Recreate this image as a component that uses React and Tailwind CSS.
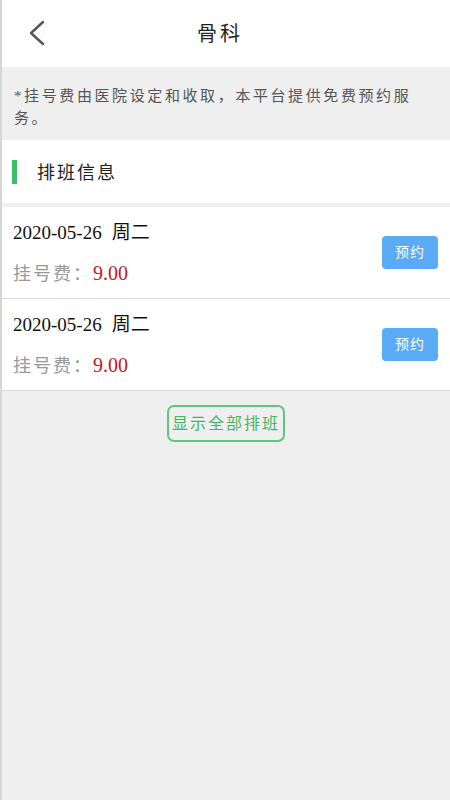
import React from "react";

const rows = [
  { date: "2020-05-26", week: "周二", fee: "9.00" },
  { date: "2020-05-26", week: "周二", fee: "9.00" },
];

const font = {
  fontFamily: '"Liberation Serif", "Noto Sans CJK SC", serif',
};

export default function App() {
  return (
    <div
      className="w-[450px] min-h-[800px] bg-[#efefef] border-l-2 border-[#d6d6d6] flex flex-col"
      style={font}
    >
      {/* Header */}
      <div className="h-[67px] bg-white flex items-center relative">
        <svg
          className="absolute left-[26px] top-[20px]"
          width="18"
          height="26"
          viewBox="0 0 18 26"
          fill="none"
          stroke="#555"
          strokeWidth="2.4"
          strokeLinecap="round"
          strokeLinejoin="round"
        >
          <path d="M15 2L3 13l12 11" />
        </svg>
        <h1 className="w-full text-center text-[20px] text-[#222] tracking-[3px] pr-[12px]">
          骨科
        </h1>
      </div>

      {/* Notice */}
      <div className="h-[73px] px-[12px] pt-[18px] text-[15px] leading-[22px] tracking-[2.6px] text-[#555]">
        *挂号费由医院设定和收取，本平台提供免费预约服务。
      </div>

      {/* Section title */}
      <div className="h-[67px] bg-white flex items-center border-b-4 border-[#f0f0f0]">
        <div className="ml-[10px] w-[5px] h-[24px] bg-[#3dbf6a]" />
        <span className="ml-[20px] pt-[3px] text-[18px] tracking-[2px] text-[#222]">
          排班信息
        </span>
      </div>

      {/* Schedule rows */}
      {rows.map((r, i) => (
        <div
          key={i}
          className="h-[92px] bg-white border-b border-[#d8d8d8] flex items-center justify-between pl-[11px] pr-[12px]"
        >
          <div className="flex flex-col gap-[16px] pt-[2px]">
            <div className="text-[19px] leading-[24px] text-[#111]">
              {r.date}
              <span className="ml-[10px]">{r.week}</span>
            </div>
            <div className="text-[18px] leading-[24px] flex items-baseline">
              <span className="text-[#999] tracking-[2px]">挂号费：</span>
              <span className="text-[#c8161e] text-[20px]">{r.fee}</span>
            </div>
          </div>
          <button className="w-[56px] h-[33px] rounded-[4px] bg-[#5aabf5] text-white text-[14px] tracking-[1px]">
            预约
          </button>
        </div>
      ))}

      {/* Show all */}
      <div className="flex justify-center pt-[14px]">
        <button className="w-[118px] h-[37px] rounded-[7px] border-2 border-[#5cc77f] text-[#3fb564] text-[16px] tracking-[2px] bg-transparent">
          显示全部排班
        </button>
      </div>
    </div>
  );
}
